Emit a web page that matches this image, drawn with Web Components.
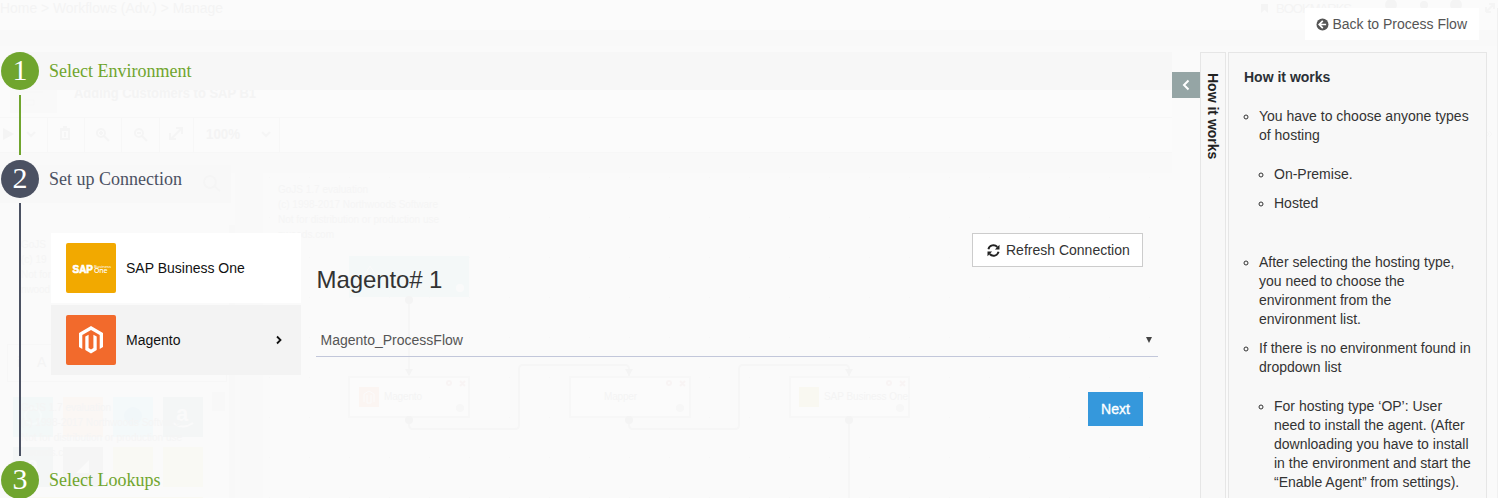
<!DOCTYPE html>
<html lang="en">
<head>
<meta charset="utf-8">
<title>Process Flow</title>
<style>
html,body{margin:0;height:100%;overflow:hidden;background:#fafafa}
body{font:14px/19px "Liberation Sans",Arial,sans-serif;color:#333}
</style>
</head>
<body>
<connection-wizard></connection-wizard>
<script>
const define = (name, html) => customElements.define(name, class extends HTMLElement {
  constructor() {
    super();
    this.attachShadow({ mode: "open" }).innerHTML = html(this);
  }
});

// Faded editor that lies under the wizard overlay
define("flow-backdrop", () => `
<style>
:host{position:absolute;inset:0;z-index:0;overflow:hidden;pointer-events:none}
svg{display:block}
text{font-family:"Liberation Sans",Arial,sans-serif;fill:#f4f4f4}
.l{stroke:#f7f7f7;fill:none}
.k{stroke:#f6f6f6;stroke-width:2;fill:none}
.d{fill:#f4f4f4}
.s{font-size:10px;fill:#f5f5f5}
.i{stroke:#f5f5f5;stroke-width:2;fill:none}
</style>
<svg width="1498" height="498" viewBox="0 0 1498 498" aria-hidden="true">
<defs>
<pattern id="g" width="40" height="40" patternUnits="userSpaceOnUse" x="309" y="177"><path d="M0 0h1v1H0z" fill="#f7f7f7"/></pattern>
</defs>
<path d="M0 0h1498v30H0z" fill="#fbfbfb"/>
<path d="M0 30h1498v16H0z" fill="#f9f9f9"/>
<path d="M0 90h1172v62H0z" fill="#fbfbfb"/>
<path d="M0 152h1172v21H0z" fill="#f9f9f9"/>
<path d="M235 152h28v346h-28z" fill="#f9f9f9"/>
<path d="M263 173h909v325H263z" fill="url(#g)"/>
<text x="0" y="13" font-size="14" textLength="223" lengthAdjust="spacingAndGlyphs">Home &gt; Workflows (Adv.) &gt; Manage</text>
<path d="M1261 4h7v9l-3.500-3-3.500 3z" class="d"/>
<text x="1276" y="13" font-size="13" textLength="76">BOOKMARKS</text>
<circle cx="1391" cy="5" r="6" class="d"/><circle cx="1424" cy="5" r="4" class="d"/><circle cx="1456" cy="5" r="6" class="d"/>
<path d="M1486 12l8-8m-5 0h5v5m-8 3v-5m0 5h5" class="i"/>
<text x="74" y="98" font-size="14" font-weight="700" textLength="182" lengthAdjust="spacingAndGlyphs">Adding Customers to SAP B1</text>
<path d="M10 90h47v23H10z" fill="#f9f9f9"/><path d="M20 92h23M25 100h9v5h-9z" class="l"/>
<path d="M0 117.500h1172M0 152.500h1172M47.500 118v34M84.500 118v34M121.500 118v34M159.500 118v34M193.500 118v34M279.500 118v34" class="l"/>
<path d="M3 128l11 6-11 6z" class="d"/>
<path d="M27 132l4 4 4-4M262 132l4 4 4-4" class="i"/>
<path d="M61 130h8v9h-8zM60 129h10M63 127h4M65 132v5" class="i"/>
<circle cx="101" cy="133" r="4" class="i"/><path d="M104 136l5 5M99 133h4M101 131v4" class="i"/>
<circle cx="139" cy="133" r="4" class="i"/><path d="M142 136l5 5M137 133h4" class="i"/>
<path d="M171 139l10-10m-5-1h6v6m-6 5h-6v-6" class="i"/>
<text x="206" y="139" font-size="14" font-weight="700" textLength="34" lengthAdjust="spacingAndGlyphs">100%</text>
<path d="M0 165h231v38H0z" fill="#f8f8f8"/>
<circle cx="210" cy="182" r="6" class="i"/><path d="M214 186l6 5" class="i"/>
<text class="s" x="278" y="193" textLength="90">GoJS 1.7 evaluation</text><text class="s" x="278" y="208" textLength="160">(c) 1998-2017 Northwoods Software</text><text class="s" x="278" y="223" textLength="161">Not for distribution or production use</text><text class="s" x="278" y="238" textLength="56">nwoods.com</text>
<text class="s" x="21" y="248">GoJS</text><text class="s" x="21" y="263">(c) 19</text><text class="s" x="21" y="278">Not for</text><text class="s" x="21" y="293" textLength="29">nwood</text>
<path d="M7.500 344.500h219v37H7.500z" class="l"/><text x="17" y="367" font-size="14" font-weight="700">i</text><text x="37" y="367" font-size="14">A</text>
<path d="M229 225h6v273h-6z" fill="#f8f8f8"/>
<path d="M13 397h40v40H13z" fill="#f3f8f8"/><path d="M63 397h40v40H63z" fill="#fbf7f4"/><path d="M113 397h40v40h-40z" fill="#f4f9fa"/><path d="M163 397h40v40h-40z" fill="#f4f6f6"/>
<path d="M13 447h40v40H13z" fill="#f4f6f6"/><path d="M63 447h40v40H63z" fill="#f5f5f5"/><path d="M113 447h40v40h-40zM163 447h40v40h-40z" fill="#f9f9f4"/>
<path d="M13 497h190v1H13z" fill="#f9f8f2"/><path d="M212 392h13v19h-13z" fill="#f8f8f8"/>
<circle cx="33" cy="416" r="8" fill="none" stroke="#f6fafa" stroke-width="2"/><circle cx="133" cy="416" r="9" fill="#f1f7f9"/>
<text x="176" y="421" font-size="22" font-weight="700" style="fill:#fafafa">a</text><path d="M173 423q10 7 20 0" stroke="#fafafa" stroke-width="2" fill="none"/>
<text x="26" y="472" font-size="22" font-weight="700" style="fill:#fafafa">a</text><path d="M76 473l13-13v13z" fill="#fafafa"/>
<text class="s" x="21" y="411" textLength="90">GoJS 1.7 evaluation</text><text class="s" x="21" y="426" textLength="160">(c) 1998-2017 Northwoods Software</text><text class="s" x="21" y="441" textLength="161">Not for distribution or production use</text><text class="s" x="21" y="456" textLength="56">nwoods.com</text>
<path d="M349 256h120v41H349z" fill="#f4f8f8"/><path d="M365 274l5-8 5 8" stroke="#fafafa" fill="none"/><circle cx="460" cy="288" r="4" fill="#fafafa"/>
<path d="M409 300v75M409 419v6q0 4 4 4h102q4 0 4-4v-56q0-4 4-4h102q4 0 4 4v7M629 419v6q0 4 4 4h102q4 0 4-4v-56q0-4 4-4h102q4 0 4 4v7M849 419v79" class="k"/>
<path d="M349 377h120v40H349zM570 377h120v40H570zM790 377h119v40H790z" style="fill:#fbfbfb;stroke:#f7f7f7;stroke-width:2"/>
<path d="M405 369h8l-4 7zM625 369h8l-4 7zM845 369h8l-4 7z" class="d"/>
<circle cx="409" cy="300" r="4" class="d"/><circle cx="409" cy="420" r="4" class="d"/><circle cx="629" cy="420" r="4" class="d"/><circle cx="849" cy="420" r="4" class="d"/>
<circle cx="460" cy="408" r="4" fill="#f7f7f7"/><circle cx="680" cy="408" r="4" fill="#f7f7f7"/><circle cx="900" cy="408" r="4" fill="#f7f7f7"/>
<path d="M359 387h20v20h-20z" fill="#fbf5f2"/><path d="M364 402v-8l5-3 5 3v8m-7-7v8h4v-8" stroke="#fbfbfb" fill="none"/><path d="M799 387h20v20h-20z" fill="#f9f8f1"/>
<text x="384" y="400" font-size="10" textLength="38">Magento</text><text x="604" y="400" font-size="10" textLength="33">Mapper</text><text x="824" y="400" font-size="10" textLength="84">SAP Business One</text>
<g stroke="#f8f4f4" stroke-width="2" fill="none"><path d="M460 381l5 5m0-5l-5 5M680 381l5 5m0-5l-5 5M900 381l5 5m0-5l-5 5"/><circle cx="449" cy="383" r="2"/><circle cx="669" cy="383" r="2"/><circle cx="889" cy="383" r="2"/></g>
<path d="M1497.500 8v490" stroke="#f1f1f1"/><path d="M1486 131l3 3-3 3m3-6l3 3-3 3" class="l"/>
</svg>`);

define("back-button", () => `
<style>
:host{display:flex;align-items:center;box-sizing:border-box;width:174px;height:32px;background:#fff;color:#555;padding-left:11px;gap:3.4px;white-space:nowrap}
</style>
<svg width="13" height="13" viewBox="0 0 13 13"><circle cx="6.500" cy="6.500" r="6" fill="#555"/><path d="M6.800 2.800L3.200 6.500l3.600 3.700M3.600 6.500h6.500" stroke="#fff" stroke-width="1.700" fill="none"/></svg>
<span><slot></slot></span>`);

define("wizard-step", el => `
<style>
:host{display:flex;align-items:center;height:38px;padding-left:1px;gap:10px;font-family:"Liberation Serif","Times New Roman",serif;font-size:18px;color:#70a52e;--dot:#70a52e}
:host([current]){color:#4b5162;--dot:#4b5162}
:host([band]){background:linear-gradient(90deg,#fafafa 20px,#f7f7f7 20px)}
b{font-weight:400;width:38px;height:38px;border-radius:50%;background:var(--dot);color:#fff;font-size:30px;line-height:35px;text-align:center;flex:none}
</style>
<b>${el.getAttribute("number")}</b><span><slot></slot></span>`);

define("step-body", () => `
<style>
:host{display:block;padding:5px 0 5px 19px}
div{border-left:2px solid var(--line,#70a52e);box-sizing:border-box;height:var(--len,60px);padding-left:30px;display:flex}
</style>
<div><slot></slot></div>`);

define("app-item", el => `
<style>
:host{display:flex;align-items:center;box-sizing:border-box;width:250px;height:70px;padding:0 18px 0 15px;background:#fff;color:#111}
:host([selected]){background:#f3f3f3}
span{flex:1;padding-left:10px}
.chev{display:none}
:host([selected]) .chev{display:block}
</style>
<slot name="logo"></slot><span><slot></slot></span>
<svg class="chev" width="8" height="10" viewBox="0 0 8 10"><path d="M2 1.500l3.500 3.500L2 8.500" stroke="#111" stroke-width="1.800" fill="none"/></svg>`);

define("sap-logo", () => `
<style>:host{display:flex;align-items:center;justify-content:center;width:50px;height:50px;border-radius:2px;background:#f2a900;color:#fff;flex:none}
svg{display:block}text{font-family:"Liberation Sans",Arial,sans-serif;fill:#fff}.o{font-family:"Noto Sans","Open Sans",sans-serif}</style>
<svg width="50" height="50" viewBox="0 0 50 50"><text x="6.500" y="30" font-size="11.500" font-weight="700" textLength="20.500" lengthAdjust="spacingAndGlyphs" stroke="#fff" stroke-width=".7">SAP</text><text class="o" x="28" y="24.500" font-size="4.200" textLength="17">Business</text><text class="o" x="28" y="30.200" font-size="7" font-weight="500" textLength="13.500">One</text></svg>`);

define("magento-logo", () => `
<style>:host{display:block;width:50px;height:50px;border-radius:2px;background:#f26a2c;flex:none}svg{display:block}</style>
<svg width="50" height="50" viewBox="0 0 50 50" fill="#fff"><path d="M25 11l12 7v14l-3.300 2V20L25 15l-8.700 5v14L13 32V18z"/><path d="M19.300 21.500l3.300-1.800V33l2.400 1.500 2.400-1.500V19.700l3.300 1.800V35L25 38.600 19.300 35z"/></svg>`);

define("refresh-button", () => `
<style>
:host{display:flex;align-items:center;box-sizing:border-box;width:171px;height:34px;border:1px solid #ccc;background:#fff;padding-left:14px;gap:6px;color:#333;white-space:nowrap}
</style>
<svg width="13" height="13" viewBox="0 0 13 13"><path d="M1.400 5.200A5.200 5.200 0 0 1 10.300 3M11.600 7.800A5.200 5.200 0 0 1 2.700 10" stroke="#222" stroke-width="1.900" fill="none"/><path d="M12.500.8v4.600H7.900zM.5 12.200V7.600h4.600z" fill="#222"/></svg>
<span><slot></slot></span>`);

define("flow-select", () => `
<style>
:host{display:flex;align-items:center;justify-content:space-between;box-sizing:border-box;height:34px;border-bottom:1px solid #c2c7da;padding:1px 6px 0 4.500px;color:#555}
i{width:6px;height:6px;background:#444;clip-path:polygon(0 0,100% 0,50% 100%)}
</style>
<span><slot></slot></span><i></i>`);

define("next-button", () => `
<style>:host{display:flex;align-items:center;justify-content:center;width:55px;height:34px;background:#3598dc;color:#fff;-webkit-text-stroke:.35px #fff}</style>
<span><slot></slot></span>`);

define("connection-form", () => `
<style>
:host{display:flex;flex-direction:column;flex:none;width:842px;margin-left:15px}
.top{display:flex;justify-content:space-between;padding-right:15px;height:90px}
h2{font:400 24px/28px "Liberation Sans",Arial,sans-serif;letter-spacing:-.1px;color:#333;margin:33px 0 0 .5px}
.foot{display:flex;justify-content:flex-end;padding:35px 15px 0 0}
</style>
<div class="top"><h2>Magento# 1</h2><refresh-button>Refresh Connection</refresh-button></div>
<flow-select>Magento_ProcessFlow</flow-select>
<div class="foot"><next-button>Next</next-button></div>`);

define("help-panel", () => `
<style>
:host{display:flex;align-items:flex-start;height:446px;gap:0}
.toggle{display:flex;align-items:center;justify-content:center;width:28px;height:26px;margin-top:20px;background:#95a5a5}
.tab,.body{box-sizing:border-box;height:460px;border:1px solid #e6e6e6;background:#f8f8f8}
.tab{width:26px;margin-right:2px;padding-top:20px;display:flex;justify-content:center;align-items:flex-start}
.tab b{writing-mode:vertical-rl;line-height:24px;color:#222}
.body{width:259px;padding:15px 15px 0 15px}
h3{font-size:14px;line-height:19px;margin:0 0 20px;color:#2b3036}
ul{list-style:circle;margin:0;padding-left:15px}
li{margin-bottom:10px}
ul ul{margin:20px 0 40px}
</style>
<div class="toggle"><svg width="8" height="12" viewBox="0 0 8 12"><path d="M6.500 1.500L2 6l4.500 4.500" stroke="#fff" stroke-width="2" fill="none"/></svg></div>
<div class="tab"><b>How it works</b></div>
<div class="body"><h3>How it works</h3>
<ul>
<li>You have to choose anyone types of hosting<ul><li>On-Premise.</li><li>Hosted</li></ul></li>
<li>After selecting the hosting type, you need to choose the environment from the environment list.</li>
<li>If there is no environment found in dropdown list<ul><li>For hosting type ‘OP’: User need to install the agent. (After downloading you have to install in the environment and start the “Enable Agent” from settings).</li></ul></li>
</ul></div>`);

define("connection-wizard", () => `
<style>
:host{display:block;position:relative;width:1498px;height:498px;overflow:hidden}
.page{position:relative;z-index:1}
header{display:flex;justify-content:flex-end;height:44px;padding:8px 19px 0 0}
main{display:flex}
.steps{width:1172px}
.list{display:flex;flex-direction:column;gap:2px;margin-top:30px;width:250px}
connection-form{margin-top:30px}
</style>
<flow-backdrop></flow-backdrop>
<div class="page">
<header><back-button>Back to Process Flow</back-button></header>
<main>
<div class="steps">
<wizard-step number="1" band>Select Environment</wizard-step>
<step-body></step-body>
<wizard-step number="2" current>Set up Connection</wizard-step>
<step-body style="--line:#4b5162;--len:253px">
<div class="list">
<app-item><sap-logo slot="logo"></sap-logo>SAP Business One</app-item>
<app-item selected><magento-logo slot="logo"></magento-logo>Magento</app-item>
</div>
<connection-form></connection-form>
</step-body>
<wizard-step number="3">Select Lookups</wizard-step>
</div>
<help-panel></help-panel>
</main>
</div>`);
</script>
</body>
</html>
